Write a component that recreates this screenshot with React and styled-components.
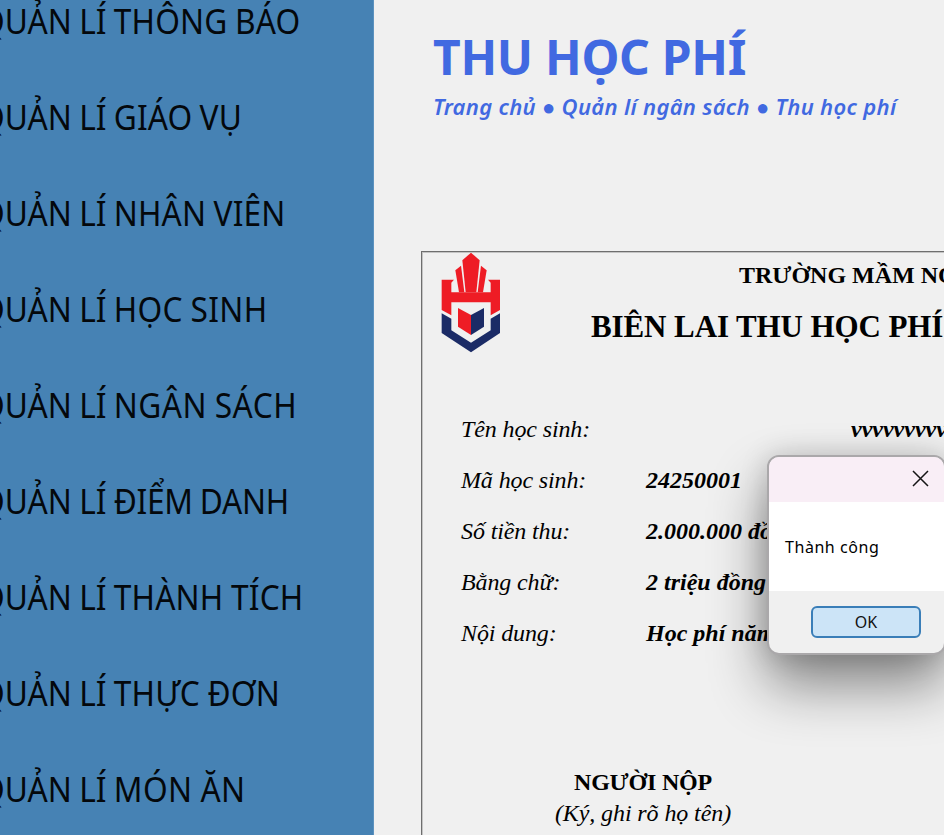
import React from 'react';
import styled, { createGlobalStyle } from 'styled-components';

const GlobalStyle = createGlobalStyle`
  * { box-sizing: border-box; }
  body { margin: 0; background: #f0f0f0; overflow: hidden; }
`;

const sans = '"Noto Sans", "Open Sans", sans-serif';
const serif = '"Liberation Serif", serif';

const Page = styled.div`
  position: relative;
  display: flex;
  width: 944px;
  height: 835px;
  overflow: hidden;
  background: #f0f0f0;
  color: #000;
`;

const Sidebar = styled.nav`
  flex: 0 0 374px;
  display: flex;
  flex-direction: column;
  padding-top: 3px;
  margin-top: -30px;
  overflow: hidden;
  background: #4682b4;
  border-right: 1px solid #5c92bf;
`;

const MenuItem = styled.a`
  flex: 0 0 96px;
  height: 96px;
  line-height: 96px;
  margin-left: -20px;
  white-space: pre;
  font-family: ${sans};
  font-size: 34px;
  word-spacing: -1px;
  transform: scaleX(0.931);
  transform-origin: left center;
  color: #04080c;
`;

const MenuName = styled.span`
  letter-spacing: ${(p) => p.$track}px;
`;

const Main = styled.main`
  flex: 1;
  min-width: 0;
  display: flex;
  flex-direction: column;
`;

const Header = styled.header`
  height: 251px;
  padding: 24px 0 0 59px;
  font-family: ${sans};
  color: #4169e1;
  white-space: nowrap;
`;

const Heading = styled.h1`
  margin: 0;
  font-size: 48px;
  line-height: 66px;
  font-weight: 700;
  letter-spacing: -0.3px;
`;

const Breadcrumb = styled.div`
  font-size: 22px;
  line-height: 32px;
  font-weight: 600;
  font-style: italic;
  letter-spacing: 0.31px;
`;

const Receipt = styled.section`
  flex: 1;
  width: 700px;
  margin-left: 47px;
  border: 1px solid #6e6e6e;
  border-right: 0;
  border-bottom: 0;
  box-shadow: inset 1px 1px 0 #c4c4c4;
  font-family: ${serif};
  white-space: nowrap;
`;

const ReceiptHead = styled.div`
  display: flex;
  height: 152px;
  padding-left: 19px;
`;

const Logo = styled.svg`
  width: 60px;
  height: 101px;
  flex: none;
`;

const Titles = styled.div`
  padding-left: 90px;
`;

const School = styled.div`
  padding-left: 148px;
  margin-top: 8px;
  font-size: 24px;
  line-height: 31px;
  font-weight: 700;
`;

const ReceiptTitle = styled.div`
  margin-top: 16px;
  font-size: 31px;
  line-height: 40px;
  font-weight: 700;
  letter-spacing: -0.1px;
`;

const Row = styled.div`
  display: flex;
  height: 51px;
  padding-left: 39px;
  line-height: 51px;
  font-size: 24px;
  font-style: italic;
`;

const Label = styled.span`
  flex: 0 0 185px;
  letter-spacing: -0.12px;
`;

const Value = styled.span`
  font-weight: 700;
  padding-left: ${(p) => p.$indent || 0}px;
`;

const Signature = styled.div`
  width: 200px;
  margin: 108px 0 0 121px;
  text-align: center;
  line-height: 31px;
`;

const Signer = styled.div`
  font-size: 24px;
  font-weight: 700;
  letter-spacing: -0.2px;
`;

const SignNote = styled.div`
  font-size: 24px;
  font-style: italic;
  letter-spacing: -0.1px;
`;

const Dialog = styled.div`
  position: absolute;
  left: 767px;
  top: 455px;
  width: 179px;
  height: 200px;
  display: flex;
  flex-direction: column;
  overflow: hidden;
  border: 2px solid #aaa8aa;
  border-radius: 12px;
  background: #f0f0f0;
  box-shadow: 0 30px 56px rgba(0, 0, 0, 0.45), 0 0 28px rgba(0, 0, 0, 0.16);
  font-family: ${sans};
  font-size: 16px;
`;

const TitleBar = styled.div`
  flex: 0 0 45px;
  display: flex;
  justify-content: flex-end;
  padding: 13px 15px 0 0;
  background: #f9eef6;
`;

const CloseIcon = styled.svg`
  width: 17px;
  height: 17px;
`;

const DialogBody = styled.div`
  flex: 0 0 89px;
  display: flex;
  align-items: center;
  padding: 0 0 0 16px;
  background: #fff;
  letter-spacing: 0.55px;
`;

const DialogFooter = styled.div`
  padding: 14.5px 0 0 42px;
`;

const OkButton = styled.button`
  display: block;
  width: 110px;
  height: 32px;
  padding: 0;
  border: 2px solid #3a7eb8;
  border-radius: 6px;
  background: #cce4f7;
  color: #111;
  font: 16px ${sans};
`;

const menu = [
  ['THÔNG BÁO', 0.2],
  ['GIÁO VỤ', 0.1],
  ['NHÂN VIÊN', 0.15],
  ['HỌC SINH', 0.35],
  ['NGÂN SÁCH', 0.5],
  ['ĐIỂM DANH', -0.3],
  ['THÀNH TÍCH', 0.2],
  ['THỰC ĐƠN', 0.2],
  ['MÓN ĂN', 0.5],
];

const rows = [
  { label: 'Tên học sinh:', value: 'vvvvvvvvvvvvvv', indent: 205 },
  { label: 'Mã học sinh:', value: '24250001' },
  { label: 'Số tiền thu:', value: '2.000.000 đồng' },
  { label: 'Bằng chữ:', value: '2 triệu đồng' },
  { label: 'Nội dung:', value: 'Học phí năm học' },
];

export default function App() {
  return (
    <Page>
      <GlobalStyle />
      <Sidebar>
        {menu.map(([name, track]) => (
          <MenuItem key={name}>
            {'QUẢN LÍ '}
            <MenuName $track={track}>{name}</MenuName>
          </MenuItem>
        ))}
      </Sidebar>
      <Main>
        <Header>
          <Heading>THU HỌC PHÍ</Heading>
          <Breadcrumb>Trang chủ ● Quản lí ngân sách ● Thu học phí</Breadcrumb>
        </Header>
        <Receipt>
          <ReceiptHead>
            <Logo viewBox="78 20 180 303" preserveAspectRatio="none">
              <g fill="#ee1c25">
                <path d="M168 22 194 45 184 141H152L142 45Z" />
                <path d="M138 61 148 141H132L121 75Z" />
                <path d="M198 61 215 75 204 141H188Z" />
                <path d="M80 103H117L109 112V141H227V112L219 103H255V194L227 210V171H109V210L80 194Z" />
                <path d="M129 188 168 209V269L129 244Z" />
              </g>
              <g fill="#1b2b66">
                <path d="M168 209 207 188V244L168 269Z" />
                <path d="M80 204 109 220V255L168 292 227 255V220L255 204V263L168 321 80 263Z" />
              </g>
            </Logo>
            <Titles>
              <School>TRƯỜNG MẦM NON</School>
              <ReceiptTitle>BIÊN LAI THU HỌC PHÍ</ReceiptTitle>
            </Titles>
          </ReceiptHead>
          {rows.map((r) => (
            <Row key={r.label}>
              <Label>{r.label}</Label>
              <Value $indent={r.indent}>{r.value}</Value>
            </Row>
          ))}
          <Signature>
            <Signer>NGƯỜI NỘP</Signer>
            <SignNote>(Ký, ghi rõ họ tên)</SignNote>
          </Signature>
        </Receipt>
      </Main>
      <Dialog>
        <TitleBar>
          <CloseIcon viewBox="0 0 17 17" fill="none" stroke="#151515" strokeWidth="1.5">
            <path d="M1 1 16 16M16 1 1 16" />
          </CloseIcon>
        </TitleBar>
        <DialogBody>Thành công</DialogBody>
        <DialogFooter>
          <OkButton>OK</OkButton>
        </DialogFooter>
      </Dialog>
    </Page>
  );
}
